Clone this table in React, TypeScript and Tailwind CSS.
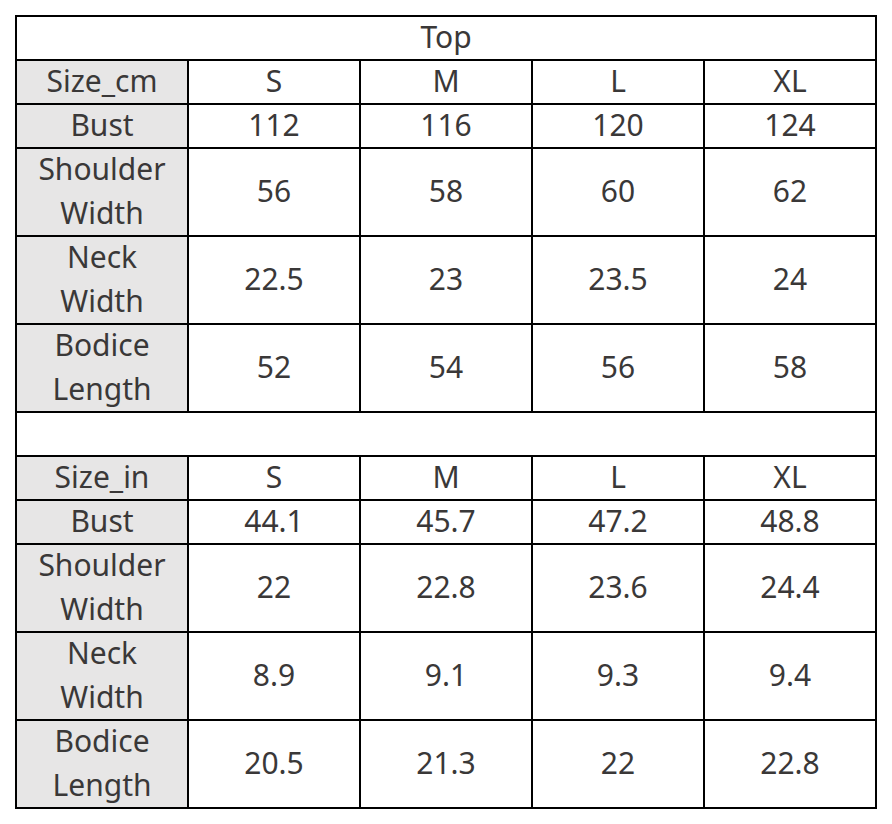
import React from 'react';

type Row = { label: string[]; values: string[]; head?: boolean };

const cmRows: Row[] = [
    { label: ['Size_cm'], values: ['S', 'M', 'L', 'XL'], head: true },
    { label: ['Bust'], values: ['112', '116', '120', '124'] },
    { label: ['Shoulder', 'Width'], values: ['56', '58', '60', '62'] },
    { label: ['Neck', 'Width'], values: ['22.5', '23', '23.5', '24'] },
    { label: ['Bodice', 'Length'], values: ['52', '54', '56', '58'] },
];

const inRows: Row[] = [
    { label: ['Size_in'], values: ['S', 'M', 'L', 'XL'], head: true },
    { label: ['Bust'], values: ['44.1', '45.7', '47.2', '48.8'] },
    { label: ['Shoulder', 'Width'], values: ['22', '22.8', '23.6', '24.4'] },
    { label: ['Neck', 'Width'], values: ['8.9', '9.1', '9.3', '9.4'] },
    { label: ['Bodice', 'Length'], values: ['20.5', '21.3', '22', '22.8'] },
];

const SizeRows = ({ rows }: { rows: Row[] }) => (
    <>
        {rows.map((row) => {
            const h = row.label.length > 1 ? 'h-[86px]' : 'h-[42px]';
            return (
                <React.Fragment key={row.label.join(' ')}>
                    <div className={`${h} bg-[#e7e6e6] flex flex-col items-center justify-center leading-[44px] pb-[2px]`}>
                        {row.label.map((l) => (
                            <span key={l}>{l}</span>
                        ))}
                    </div>
                    {row.values.map((v, i) => (
                        <div key={i} className={`${h} bg-white flex items-center justify-center leading-[44px] pb-[2px]`}>
                            {v}
                        </div>
                    ))}
                </React.Fragment>
            );
        })}
    </>
);

export default function App() {
    return (
        <div className="min-h-screen bg-white pl-[15px] pt-[15px] font-['Noto_Sans',sans-serif] text-[30px] text-[#3a3838]">
            <div className="grid w-[862px] grid-cols-[repeat(5,170px)] gap-[2px] bg-black p-[2px]">
                <div className="col-span-5 h-[42px] bg-white flex items-center justify-center leading-[44px] pb-[2px]">Top</div>
                <SizeRows rows={cmRows} />
                <div className="col-span-5 h-[42px] bg-white"></div>
                <SizeRows rows={inRows} />
            </div>
        </div>
    );
}
